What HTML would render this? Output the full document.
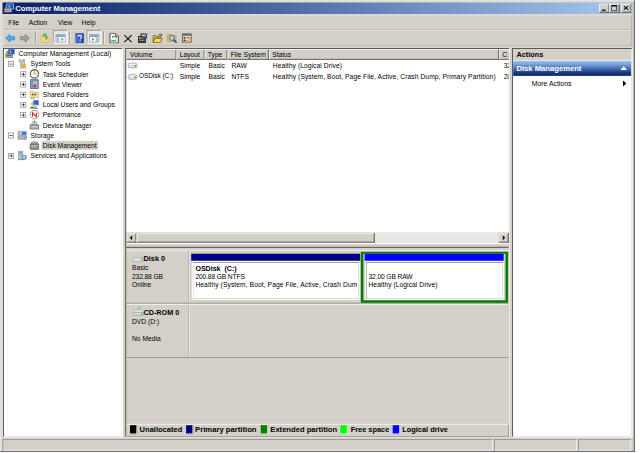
<!DOCTYPE html>
<html><head><meta charset="utf-8">
<title>Computer Management</title>
<style>
*{box-sizing:border-box;margin:0;padding:0}
html,body{width:640px;height:453px;overflow:hidden;background:#fff}
body{position:relative;font-family:"Liberation Sans",sans-serif}
#win{position:absolute;left:0;top:0;width:996px;height:709px;background:#d4d0c8;transform:scale(0.6375);transform-origin:0 0;font-size:10.7px;color:#000;overflow:hidden}
#win div,#win span,#win svg{position:absolute}
.t{white-space:nowrap;font-size:10.5px;line-height:16px;height:16px;color:#000}
.b{font-weight:bold;font-size:11.6px}
.white{background:#fff}
/* frame */
#f1{left:0;top:0;width:996px;height:709px;border:1px solid;border-color:#d4d0c8 #282828 #282828 #d4d0c8}
#f2{left:1px;top:1px;width:994px;height:707px;border:1px solid;border-color:#fff #808080 #808080 #fff}
/* caption */
#cap{left:4px;top:4px;width:988px;height:18px;background:linear-gradient(90deg,#0a246a 0%,#0a246a 3%,#a6caf0 100%)}
#cap .t{left:20px;top:1px;color:#fff;font-size:12px}
.cb{top:2px;width:16px;height:14px;background:#d4d0c8;border:1px solid;border-color:#fff #404040 #404040 #fff;box-shadow:inset -1px -1px 0 #808080}
/* bands */
.band{left:4px;width:987px;border:1px solid;border-color:#f0eeea #aca8a0 #b4b0a8 #f0eeea}
.sep{width:2px;height:20px;top:49px;border-left:1px solid #808080;border-right:1px solid #fff}
.chk{top:47px;width:23px;height:22px;background:#ebe9e5;border:1px solid;border-color:#808080 #fff #fff #808080}
.ic{width:16px;height:16px;top:52px}
/* sunken panes */
.sunk{border:1px solid;border-color:#d4d0c8 #fff #fff #d4d0c8;box-shadow:inset -1px -1px 0 #d4d0c8}
.dk{background:#505050}
/* tree */
.pm{width:9px;height:9px;border:1px solid #808080;background:#fff}
.pm i{position:absolute;left:1px;top:3px;width:5px;height:1px;background:#000}
.pm.p b{position:absolute;left:3px;top:1px;width:1px;height:5px;background:#000}
.ti{width:16px;height:16px}
/* list header */
.hd{top:77px;height:17px;background:#d4d0c8;border:1px solid;border-color:#fff #404040 #404040 #fff;box-shadow:inset -1px -1px 0 #808080}
.hd span{left:4px;top:0;font-size:10.5px;line-height:15px;white-space:nowrap}
/* scrollbar */
.sb{top:365px;height:16px;background:#d4d0c8;border:1px solid;border-color:#d4d0c8 #404040 #404040 #d4d0c8;box-shadow:inset 1px 1px 0 #fff,inset -1px -1px 0 #808080}
/* disk view */
.lg{top:667px;width:11px;height:14px;border-right:1px solid #fff;border-bottom:1px solid #fff}
.lt{top:666px}
.st{top:689px;height:18px;border:1px solid;border-color:#808080 #fff #fff #808080}
</style></head><body>
<div id="win">
<div id="f1"></div><div id="f2"></div>

<!-- caption -->
<div id="cap">
  <svg style="left:2px;top:1px" width="16" height="16" viewBox="0 0 16 16"><rect x="4.500" y="1" width="10.500" height="8" fill="#2450c4" stroke="#b4c8f0" stroke-width="1.200"/><path d="M7 3l4 2-3 2.500z" fill="#cfe0ff" opacity=".8"/><rect x="1" y="8.500" width="11" height="5.500" fill="#c4c2bc" stroke="#70706c" stroke-width=".9"/><rect x="2.500" y="10.500" width="7" height="1.200" fill="#585858"/><rect x="2" y="4" width="2" height="4" fill="#3a9a48"/></svg>
  <div class="t b">Computer Management</div>
  <div class="cb" style="left:936px"><div style="left:3px;top:8px;width:6px;height:2px;background:#000"></div></div>
  <div class="cb" style="left:952px"><div style="left:2px;top:1px;width:9px;height:9px;border:1px solid #000;border-top-width:2px"></div></div>
  <div class="cb" style="left:970px"><svg style="left:3px;top:2px" width="8" height="7" viewBox="0 0 8 7"><path d="M0 0L8 7M8 0L0 7" stroke="#000" stroke-width="1.6" fill="none"/></svg></div>
</div>

<!-- menu band -->
<div class="band" style="top:23px;height:24px"></div>
<div class="t" style="left:13px;top:27px">File</div>
<div class="t" style="left:45px;top:27px">Action</div>
<div class="t" style="left:91px;top:27px">View</div>
<div class="t" style="left:128px;top:27px">Help</div>

<!-- toolbar band -->
<div class="band" style="top:47px;height:25px"></div>
<!-- TOOLBAR ICONS -->
<div id="tb">
<!-- back -->
<svg class="ic" style="left:8px" viewBox="0 0 16 16"><path d="M1 8l6.500-6v3.500h7.500v5H7.500V14z" fill="#48acee" stroke="#1c7cd0" stroke-width="1"/></svg>
<!-- forward -->
<svg class="ic" style="left:31px" viewBox="0 0 16 16"><path d="M15 8L8.500 2v3.500H1v5h7.500V14z" fill="#a4a4a0" stroke="#6c6c68" stroke-width="1"/></svg>
<div class="sep" style="left:55px"></div>
<!-- up folder -->
<svg class="ic" style="left:63px" viewBox="0 0 16 16"><path d="M1 4.500h5l1.500 1.500H15V14.500H1z" fill="#f2d684" stroke="#d2ae58" stroke-width=".8"/><path d="M5 1h5.500L9 2.800l3 4-2.200 3.700-1.800-1.200 1.300-2.300-2.300-2.700L5.300 6z" fill="#4cc458" stroke="#2c9c40" stroke-width=".4"/></svg>
<!-- show/hide console tree (checked) -->
<div class="chk" style="left:83px"></div>
<svg class="ic" style="left:87px" viewBox="0 0 16 16"><rect x=".5" y="2.500" width="15" height="11.500" fill="#e4e9f2" stroke="#7488ac" stroke-width="1"/><rect x="1" y="3" width="14" height="3" fill="#8ea2c8"/><rect x="1.500" y="7" width="4" height="6" fill="#a8bce0"/><rect x="6.500" y="7" width="8" height="6" fill="#f8fafc"/><path d="M12 7.500v5L8.500 10z" fill="#30a840"/></svg>
<div class="sep" style="left:109px"></div>
<!-- help -->
<svg class="ic" style="left:117px" viewBox="0 0 16 16"><rect x="2" y=".5" width="12" height="15" fill="#2c4cc0" stroke="#1c3494" stroke-width="1"/><rect x="2.500" y="1" width="3" height="14" fill="#5478dc"/><rect x="2.500" y="1" width="11" height="3" fill="#4468d4" opacity=".7"/><path d="M5.800 5.800c0-3 5-3 5 0 0 1.800-2.300 2-2.300 4.200" stroke="#fff" stroke-width="1.700" fill="none"/><rect x="7.500" y="11.500" width="2" height="2" fill="#fff"/></svg>
<!-- show/hide action pane (checked) -->
<div class="chk" style="left:136px"></div>
<svg class="ic" style="left:140px" viewBox="0 0 16 16"><rect x=".5" y="2.500" width="15" height="11.500" fill="#e4e9f2" stroke="#7488ac" stroke-width="1"/><rect x="1" y="3" width="14" height="3" fill="#8ea2c8"/><rect x="10.500" y="7" width="4" height="6" fill="#a8bce0"/><rect x="1.500" y="7" width="8" height="6" fill="#f8fafc"/><path d="M4.500 7.500v5L8 10z" fill="#30a840"/></svg>
<div class="sep" style="left:162px"></div>
<!-- refresh -->
<svg class="ic" style="left:171px" viewBox="0 0 16 16"><path d="M1.500.5h9l4 4v11h-13z" fill="#fff" stroke="#181818" stroke-width="1.200"/><path d="M10.500.5v4h4" fill="#e8e8e8" stroke="#181818" stroke-width="1"/><path d="M5 7.500a3.200 3.200 0 0 1 5.500-1.500" stroke="#28a038" stroke-width="1.800" fill="none"/><path d="M11 10a3.200 3.200 0 0 1-5.500 1.500" stroke="#28a038" stroke-width="1.800" fill="none"/><path d="M9 6.800l3.200.7.300-3.200z" fill="#28a038"/><path d="M7 11l-3.200-.7-.3 3.200z" fill="#28a038"/></svg>
<!-- delete X -->
<svg class="ic" style="left:193px" viewBox="0 0 16 16"><path d="M2 3l11.500 11M13.500 3L2 14" stroke="#141414" stroke-width="1.800" fill="none"/></svg>
<!-- properties -->
<svg class="ic" style="left:216px" viewBox="0 0 16 16"><rect x="1" y="5" width="11" height="10" fill="#3c3c3c" stroke="#141414" stroke-width="1"/><rect x="2.500" y="6.500" width="8" height="2.500" fill="#e8e8e8"/><rect x="2.500" y="10.500" width="8" height="1.500" fill="#9c9c9c"/><rect x="5" y="1" width="9" height="7" fill="#585858" stroke="#202020" stroke-width="1"/><rect x="6.500" y="2.500" width="6" height="2" fill="#d8d8d8"/><rect x="13" y="1" width="2.500" height="2.500" fill="#3a6ad8"/></svg>
<!-- open folder -->
<svg class="ic" style="left:239px" viewBox="0 0 16 16"><path d="M1 4h4.500L7 5.500h6V8H4l-3 6z" fill="#e4c438" stroke="#4c3c08" stroke-width="1"/><path d="M4 8h11.500l-3 6.500H1z" fill="#f6de5c" stroke="#4c3c08" stroke-width="1"/><path d="M9 3.500c2-2.500 4-2.500 5.500-1" stroke="#303030" stroke-width="1.100" fill="none"/><path d="M15 1v3h-3z" fill="#303030"/></svg>
<!-- find -->
<svg class="ic" style="left:262px" viewBox="0 0 16 16"><path d="M1 2h5l1.500 1.500H14V13H1z" fill="#ecc858" stroke="#a88420" stroke-width=".8"/><circle cx="7.500" cy="7.500" r="4" fill="#a8d4f4" stroke="#4c5c7c" stroke-width="1.400"/><path d="M10.500 10.500l4.500 4.500" stroke="#2438b8" stroke-width="2.400"/></svg>
<!-- checklist -->
<svg class="ic" style="left:285px" viewBox="0 0 16 16"><rect x="1" y="1" width="14" height="13" fill="#e8e8e4" stroke="#3c3c3c" stroke-width="1.200"/><rect x="1.500" y="1.500" width="13" height="2.500" fill="#585858"/><rect x="3" y="6" width="3" height="2.500" fill="#303030"/><rect x="7.500" y="6.500" width="5.500" height="1.500" fill="#505050"/><rect x="3" y="10" width="3" height="2.500" fill="#303030"/><path d="M7 11l2.500 3 5-6.500" stroke="#e0a810" stroke-width="2.200" fill="none"/></svg>
</div>

<!-- tree pane -->
<div class="white sunk" style="left:4px;top:75px;width:189px;height:611px"></div>
<div id="tree">
<!-- root -->
<svg class="ti" style="left:8px;top:76px" viewBox="0 0 16 16"><rect x="4.500" y="1" width="10.500" height="8" fill="#2450c4" stroke="#9cb4e4" stroke-width="1.200"/><path d="M7 3l4 2-3 2.500z" fill="#cfe0ff" opacity=".8"/><rect x="1" y="8.500" width="11" height="5.500" fill="#a8a6a0" stroke="#585858" stroke-width=".9"/><rect x="2.500" y="10.500" width="7" height="1.200" fill="#484848"/><rect x="2" y="4" width="2" height="4" fill="#3a9a48"/></svg>
<div class="t" style="left:29px;top:76px">Computer Management (Local)</div>
<!-- System Tools -->
<div class="pm" style="left:13px;top:96px"><i></i></div>
<svg class="ti" style="left:27px;top:92px" viewBox="0 0 16 16"><path d="M3 1v4l2 2v8h3V7l2-2V1H8v3H5V1z" fill="#c4c2bc" stroke="#8a8882" stroke-width=".7"/><rect x="10" y="1" width="2" height="7" fill="#aaa"/><rect x="9.3" y="8" width="3.6" height="7" rx="1" fill="#f0b820" stroke="#b07800" stroke-width=".6"/></svg>
<div class="t" style="left:48px;top:92px">System Tools</div>
<!-- Task Scheduler -->
<div class="pm p" style="left:32px;top:112px"><i></i><b></b></div>
<svg class="ti" style="left:46px;top:108px" viewBox="0 0 16 16"><circle cx="8" cy="8" r="6.600" fill="#f6f2e8" stroke="#6c6c74" stroke-width="2"/><path d="M8 3.5V8h3.5" stroke="#c89020" stroke-width="1.2" fill="none"/></svg>
<div class="t" style="left:67px;top:108px">Task Scheduler</div>
<!-- Event Viewer -->
<div class="pm p" style="left:32px;top:128px"><i></i><b></b></div>
<svg class="ti" style="left:46px;top:124px" viewBox="0 0 16 16"><rect x="2" y="1" width="12" height="14" fill="#4f7ccc" stroke="#3a5a9a" stroke-width="1"/><rect x="5" y="2.500" width="8" height="11" fill="#9cb6e6"/><rect x="2.500" y="1.500" width="2" height="13" fill="#7c9cdc"/><path d="M9 3l3 5H6z" fill="#f4c020"/><circle cx="8.5" cy="11" r="2.3" fill="#d83020"/></svg>
<div class="t" style="left:67px;top:124px">Event Viewer</div>
<!-- Shared Folders -->
<div class="pm p" style="left:32px;top:144px"><i></i><b></b></div>
<svg class="ti" style="left:46px;top:140px" viewBox="0 0 16 16"><path d="M1 3h5l1 1.5h8V13H1z" fill="#f4de90" stroke="#c8a448" stroke-width=".8"/><rect x="4" y="7" width="2.5" height="2.5" fill="#4a4a4a"/><rect x="8" y="7" width="2.5" height="2.5" fill="#4a4a4a"/><path d="M2 13.5c2 2 4 2 6 0" stroke="#38a040" stroke-width="1.3" fill="none"/></svg>
<div class="t" style="left:67px;top:140px">Shared Folders</div>
<!-- Local Users -->
<div class="pm p" style="left:32px;top:160px"><i></i><b></b></div>
<svg class="ti" style="left:46px;top:156px" viewBox="0 0 16 16"><rect x="6" y="1" width="9" height="8" fill="#2b62d8" stroke="#b4c6e8" stroke-width="1"/><circle cx="5" cy="6.5" r="2.3" fill="#e0a868"/><path d="M1 14c0-4 8-4 8 0z" fill="#3a8a3c"/><circle cx="10" cy="9.5" r="2" fill="#d8b080"/><path d="M6.5 15c0-3.5 7-3.5 7 0z" fill="#8a92a8"/></svg>
<div class="t" style="left:67px;top:156px">Local Users and Groups</div>
<!-- Performance -->
<div class="pm p" style="left:32px;top:176px"><i></i><b></b></div>
<svg class="ti" style="left:46px;top:172px" viewBox="0 0 16 16"><circle cx="8" cy="8" r="6.8" fill="#fff" stroke="#8c8c8c" stroke-width="1.4"/><path d="M5 11V5l6 6V5" stroke="#d82020" stroke-width="1.6" fill="none"/></svg>
<div class="t" style="left:67px;top:172px">Performance</div>
<!-- Device Manager -->
<svg class="ti" style="left:46px;top:188px" viewBox="0 0 16 16"><path d="M3 8l2-5h6l2 5z" fill="#c8c8c4" stroke="#808080" stroke-width=".7"/><rect x="1" y="8" width="14" height="6.5" fill="#9c9c98" stroke="#5c5c5c" stroke-width=".8"/><rect x="3" y="10" width="10" height="1.2" fill="#e4e4e0"/><rect x="3" y="12" width="10" height="1" fill="#d0d0cc"/><rect x="7" y="1" width="2" height="3" fill="#50a050"/></svg>
<div class="t" style="left:67px;top:188px">Device Manager</div>
<!-- Storage -->
<div class="pm" style="left:13px;top:208px"><i></i></div>
<svg class="ti" style="left:27px;top:204px" viewBox="0 0 16 16"><rect x="1" y="2" width="11" height="5.5" rx="1" fill="#c4c6c8" stroke="#70747c" stroke-width=".8"/><rect x="7" y="2" width="8" height="6" fill="#3a7ae0" stroke="#c0d0f0" stroke-width=".8"/><rect x="1" y="9" width="14" height="5.5" rx="1" fill="#b8babc" stroke="#60646c" stroke-width=".8"/><rect x="11" y="11" width="2.5" height="1.8" fill="#30c040"/></svg>
<div class="t" style="left:48px;top:204px">Storage</div>
<!-- Disk Management (selected) -->
<svg class="ti" style="left:46px;top:220px" viewBox="0 0 16 16"><path d="M2 6l2-3.5h8L14 6z" fill="#b8b8b4" stroke="#606060" stroke-width=".7"/><rect x="1" y="6" width="14" height="8.5" rx="1" fill="#8a8a88" stroke="#484848" stroke-width=".8"/><rect x="3" y="8" width="10" height="1.5" fill="#d8d8d4"/><rect x="3" y="11" width="7" height="1.3" fill="#a8a8a4"/><rect x="11" y="4" width="2.5" height="1.6" fill="#30c040"/></svg>
<div style="left:65px;top:221px;width:89px;height:14px;background:#d4d0c8"></div>
<div class="t" style="left:67px;top:220px">Disk Management</div>
<!-- Services and Applications -->
<div class="pm p" style="left:13px;top:240px"><i></i><b></b></div>
<svg class="ti" style="left:27px;top:236px" viewBox="0 0 16 16"><rect x="2" y="1" width="7" height="13" fill="#b4c4d8" stroke="#7c8ca4" stroke-width=".8"/><rect x="3.5" y="3" width="4" height="1" fill="#6c7c94"/><rect x="3.5" y="5.5" width="4" height="1" fill="#6c7c94"/><circle cx="11" cy="11" r="3.6" fill="#8cb0dc" stroke="#5c80b4" stroke-width="1"/><circle cx="11" cy="11" r="1.3" fill="#fff"/><rect x="1" y="14" width="9" height="1.2" fill="#40a040"/></svg>
<div class="t" style="left:48px;top:236px">Services and Applications</div>
</div>

<!-- center pane -->
<div class="sunk" style="left:196px;top:75px;width:604px;height:611px"></div>
<div class="white" style="left:198px;top:77px;width:600px;height:288px"></div>
<div id="list">
<div class="hd" style="left:198px;width:79px"><span style="left:5px">Volume</span></div>
<div class="hd" style="left:277px;width:44px"><span>Layout</span></div>
<div class="hd" style="left:321px;width:36px"><span>Type</span></div>
<div class="hd" style="left:357px;width:65px"><span>File System</span></div>
<div class="hd" style="left:422px;width:361px"><span>Status</span></div>
<div class="hd" style="left:783px;width:30px;clip-path:inset(0 15px 0 0)"><span>C:</span></div>
<!-- row 1 -->
<svg style="left:200px;top:97px" width="16" height="12" viewBox="0 0 16 12"><rect x=".6" y="2" width="14.800" height="7.500" rx="3.600" fill="#dcdee0" stroke="#8c9094" stroke-width="1"/><rect x="2" y="3" width="11" height="2" rx="1" fill="#f4f4f4"/><rect x="11" y="5" width="2.600" height="2.600" fill="#28c038"/></svg>
<div class="t" style="left:282px;top:94px">Simple</div>
<div class="t" style="left:327px;top:94px">Basic</div>
<div class="t" style="left:363px;top:94px">RAW</div>
<div class="t" style="left:428px;top:94px;letter-spacing:.1px">Healthy (Logical Drive)</div>
<div class="t" style="left:790px;top:94px;width:8px;overflow:hidden">32</div>
<!-- row 2 -->
<svg style="left:200px;top:115px" width="16" height="12" viewBox="0 0 16 12"><rect x=".6" y="2" width="14.800" height="7.500" rx="3.600" fill="#dcdee0" stroke="#8c9094" stroke-width="1"/><rect x="2" y="3" width="11" height="2" rx="1" fill="#f4f4f4"/><rect x="11" y="5" width="2.600" height="2.600" fill="#28c038"/></svg>
<div class="t" style="left:218px;top:112px;font-size:10.05px">OSDisk (C:)</div>
<div class="t" style="left:282px;top:112px">Simple</div>
<div class="t" style="left:327px;top:112px">Basic</div>
<div class="t" style="left:363px;top:112px">NTFS</div>
<div class="t" style="left:428px;top:112px;letter-spacing:.13px">Healthy (System, Boot, Page File, Active, Crash Dump, Primary Partition)</div>
<div class="t" style="left:790px;top:112px;width:8px;overflow:hidden">20</div>
<!-- horizontal scrollbar -->
<div style="left:198px;top:365px;width:600px;height:16px;background:#e9e7e3"></div>
<div class="sb" style="left:198px;width:16px"><svg style="left:4px;top:3px" width="5" height="8" viewBox="0 0 5 8"><path d="M4.500 0v8L.5 4z" fill="#000"/></svg></div>
<div class="sb" style="left:214px;width:374px"></div>
<div class="sb" style="left:782px;width:16px"><svg style="left:5px;top:3px" width="5" height="8" viewBox="0 0 5 8"><path d="M.5 0v8l4-4z" fill="#000"/></svg></div>
</div>
<div id="disk">
<!-- splitter between list and graphical view -->
<div style="left:198px;top:381px;width:600px;height:2px;background:#fff"></div>
<div style="left:198px;top:383px;width:600px;height:4px;background:#d4d0c8"></div>
<div style="left:198px;top:387px;width:600px;height:1px;background:#808080"></div>
<div style="left:198px;top:388px;width:600px;height:1px;background:#404040"></div>
<!-- Disk 0 row -->
<div style="left:199px;top:392px;width:599px;height:1px;background:#fff"></div>
<div style="left:199px;top:475px;width:599px;height:1px;background:#808080"></div>
<div style="left:296px;top:393px;width:1px;height:82px;background:#808080"></div>
<div style="left:297px;top:393px;width:1px;height:82px;background:#fff"></div>
<svg style="left:208px;top:401px" width="18" height="12" viewBox="0 0 18 12"><path d="M1 3.500L3 1h12l2 2.500z" fill="#f4f4f4" stroke="#888" stroke-width=".6"/><rect x=".6" y="3.500" width="16.800" height="5.500" rx="1" fill="#e4e6e8" stroke="#888c90" stroke-width=".8"/><rect x="13" y="5" width="2.600" height="2.200" fill="#28c038"/></svg>
<div class="t b" style="left:225px;top:398px">Disk 0</div>
<div class="t" style="left:207px;top:412px">Basic</div>
<div class="t" style="left:207px;top:425px;letter-spacing:-.2px">232.88 GB</div>
<div class="t" style="left:207px;top:438px">Online</div>
<!-- primary partition -->
<div style="left:300px;top:398px;width:265px;height:11px;background:#000080"></div>
<div style="left:301px;top:410px;width:263px;height:60px;background:#fff;border:1px solid #fff;box-shadow:inset 1px 1px 0 #808080,inset -1px -1px 0 #d4d0c8"></div>
<div class="t b" style="left:306.5px;top:413px;font-size:11.1px">OSDisk&nbsp; (C:)</div>
<div class="t" style="left:306.5px;top:426px;letter-spacing:-.22px">200.88 GB NTFS</div>
<div class="t" style="left:306.5px;top:438.3px;width:253px;overflow:hidden;letter-spacing:.13px">Healthy (System, Boot, Page File, Active, Crash Dump, Primary Partition)</div>
<!-- extended / logical -->
<div style="left:566px;top:395px;width:231px;height:80px;background:#008000"></div>
<div style="left:570px;top:398px;width:223px;height:73px;background:#d4d0c8"></div>
<div style="left:572px;top:398px;width:218px;height:11px;background:#0000ff"></div>
<div style="left:573px;top:410px;width:217px;height:60px;background:#fff;border:1px solid #fff;box-shadow:inset 1px 1px 0 #808080,inset -1px -1px 0 #d4d0c8"></div>
<div class="t" style="left:578px;top:426px;letter-spacing:-.2px">32.00 GB RAW</div>
<div class="t" style="left:578px;top:438.3px;letter-spacing:.09px">Healthy (Logical Drive)</div>
<!-- CD-ROM row -->
<div style="left:199px;top:477px;width:599px;height:1px;background:#fff"></div>
<div style="left:199px;top:560px;width:599px;height:1px;background:#808080"></div>
<div style="left:296px;top:478px;width:1px;height:82px;background:#808080"></div>
<div style="left:297px;top:478px;width:1px;height:82px;background:#fff"></div>
<svg style="left:208px;top:479px" width="18" height="17" viewBox="0 0 18 16"><path d="M8 1h5v6H8z" fill="#f8f8f8" stroke="#909090" stroke-width=".7"/><rect x="9.500" y="2.500" width="2" height="3" fill="#30b840"/><path d="M1 10.500L3.500 7h11l2.500 3.500z" fill="#f0f0f0" stroke="#909090" stroke-width=".6"/><rect x=".6" y="10.500" width="16.800" height="4.500" rx="1" fill="#dcdee0" stroke="#80848c" stroke-width=".8"/><rect x="13" y="12" width="2.600" height="1.800" fill="#28c038"/></svg>
<div class="t b" style="left:225px;top:482px;font-size:11.4px">CD-ROM 0</div>
<div class="t" style="left:207px;top:496px">DVD (D:)</div>
<div class="t" style="left:207px;top:523px">No Media</div>
<!-- legend -->
<div style="left:198px;top:665px;width:600px;height:1px;background:#fff"></div>
<div style="left:198px;top:684px;width:600px;height:1px;background:#808080"></div>
<div style="left:797px;top:666px;width:1px;height:19px;background:#808080"></div>
<div class="lg" style="left:204px;background:#000"></div><div class="t b lt" style="left:219px;font-size:11.8px">Unallocated</div>
<div class="lg" style="left:292px;background:#000080"></div><div class="t b lt" style="left:306px;font-size:12.05px">Primary partition</div>
<div class="lg" style="left:409px;background:#008000"></div><div class="t b lt" style="left:424px;font-size:11.95px">Extended partition</div>
<div class="lg" style="left:534px;background:#00ff00"></div><div class="t b lt" style="left:550px">Free space</div>
<div class="lg" style="left:616px;background:#0000ff"></div><div class="t b lt" style="left:631px">Logical drive</div>
</div>

<!-- actions pane -->
<div class="white sunk" style="left:803px;top:75px;width:189px;height:611px"></div>
<div id="act">
<div style="left:805px;top:77px;width:185px;height:17px;background:#d4d0c8"></div>
<div class="t b" style="left:810px;top:77px">Actions</div>
<div style="left:805px;top:95px;width:185px;height:24px;background:linear-gradient(180deg,#a8c8f0 0%,#7ea6dc 22%,#4a74b8 50%,#1c3c84 78%,#0a246a 100%)"></div>
<div class="t b" style="left:810px;top:100px;color:#fff;font-size:12px">Disk Management</div>
<svg style="left:973px;top:104px" width="11" height="6" viewBox="0 0 11 6"><path d="M0 6L5.500 0 11 6z" fill="#fff"/></svg>
<div class="t" style="left:834px;top:123px;font-size:10.8px">More Actions</div>
<svg style="left:977px;top:126px" width="6" height="10" viewBox="0 0 6 10"><path d="M0 0v10l5.500-5z" fill="#000"/></svg>
</div>

<!-- dark sunken edges (top/left) of the three panes -->
<svg style="left:0;top:0" width="996" height="709" viewBox="0 0 996 709" fill="#585858">
<rect x="4.7" y="75.3" width="187.3" height="1.57"/><rect x="4.7" y="75.3" width="1.5" height="609.5"/>
<rect x="196.4" y="75.3" width="602" height="1.57"/><rect x="196.4" y="75.3" width="1.57" height="609.5"/>
<rect x="803.2" y="75.3" width="188" height="1.57"/><rect x="803.2" y="75.3" width="1.57" height="609.5"/>
</svg>
<!-- status bar -->
<div class="st" style="left:4px;width:769px"></div>
<div class="st" style="left:775px;width:130px"></div>
<div class="st" style="left:907px;width:83px"></div>
</div>
</body></html>
